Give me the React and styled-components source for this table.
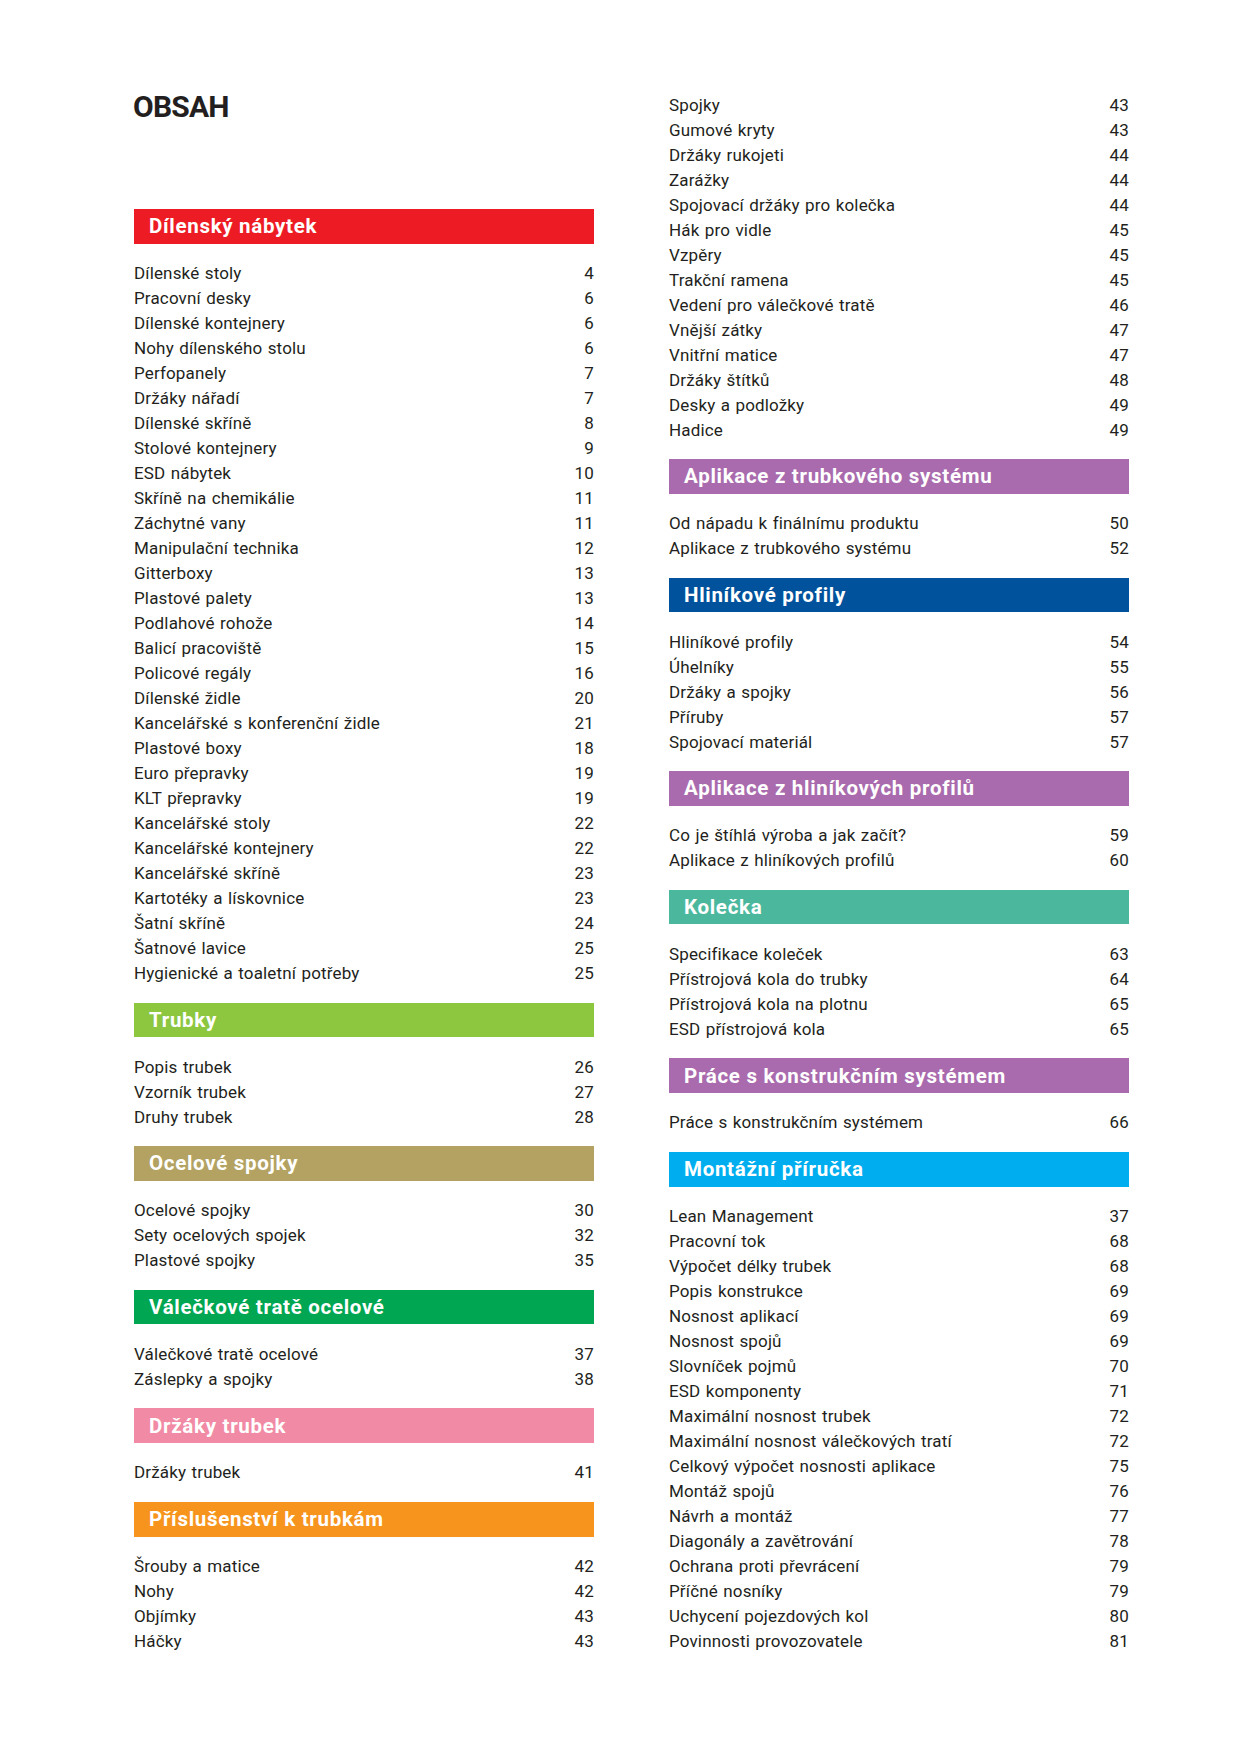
import React from 'react'
import styled, { createGlobalStyle } from 'styled-components'

const GlobalStyle = createGlobalStyle`
  body {
    margin: 0;
    background: #ffffff;
    font-family: Roboto, "Liberation Sans", sans-serif;
    color: #231f20;
  }
`;

const Page = styled.div`
  width: 1240px;
  min-height: 1753px;
  box-sizing: border-box;
  padding: 0 111px 0 134px;
  display: grid;
  grid-template-columns: 460px 460px;
  column-gap: 75px;
  align-items: start;
`;

const Column = styled.div`
  display: flex;
  flex-direction: column;
  padding-top: ${p => p.top}px;
`;

const Title = styled.h1`
  margin: 0 0 0 -1px;
  height: 120px;
  font-size: 30px;
  line-height: 36px;
  font-weight: 700;
  letter-spacing: -0.8px;
  color: #231f20;
`;

const Section = styled.section`
  display: flex;
  flex-direction: column;
  & + & {
    margin-top: 17px;
  }
`;

const Header = styled.h2`
  margin: 0 0 17px;
  height: 34.6px;
  padding: 0 15px;
  display: flex;
  align-items: center;
  background: ${p => p.color};
  color: #ffffff;
  font-size: 20.5px;
  font-weight: 700;
  letter-spacing: 0.7px;
`;

const Row = styled.div`
  display: flex;
  justify-content: space-between;
  align-items: center;
  height: 25px;
  font-size: 17px;
  letter-spacing: 0.15px;
  word-spacing: 1px;
`;

const PageNo = styled.span`
  font-variant-numeric: tabular-nums;
`;

const LEFT = [
  {
    title: 'Dílenský nábytek',
    color: '#ed1c24',
    items: [
      ['Dílenské stoly', 4],
      ['Pracovní desky', 6],
      ['Dílenské kontejnery', 6],
      ['Nohy dílenského stolu', 6],
      ['Perfopanely', 7],
      ['Držáky nářadí', 7],
      ['Dílenské skříně', 8],
      ['Stolové kontejnery', 9],
      ['ESD nábytek', 10],
      ['Skříně na chemikálie', 11],
      ['Záchytné vany', 11],
      ['Manipulační technika', 12],
      ['Gitterboxy', 13],
      ['Plastové palety', 13],
      ['Podlahové rohože', 14],
      ['Balicí pracoviště', 15],
      ['Policové regály', 16],
      ['Dílenské židle', 20],
      ['Kancelářské s konferenční židle', 21],
      ['Plastové boxy', 18],
      ['Euro přepravky', 19],
      ['KLT přepravky', 19],
      ['Kancelářské stoly', 22],
      ['Kancelářské kontejnery', 22],
      ['Kancelářské skříně', 23],
      ['Kartotéky a lískovnice', 23],
      ['Šatní skříně', 24],
      ['Šatnové lavice', 25],
      ['Hygienické a toaletní potřeby', 25],
    ],
  },
  {
    title: 'Trubky',
    color: '#8dc63f',
    items: [
      ['Popis trubek', 26],
      ['Vzorník trubek', 27],
      ['Druhy trubek', 28],
    ],
  },
  {
    title: 'Ocelové spojky',
    color: '#b3a262',
    items: [
      ['Ocelové spojky', 30],
      ['Sety ocelových spojek', 32],
      ['Plastové spojky', 35],
    ],
  },
  {
    title: 'Válečkové tratě ocelové',
    color: '#00a651',
    items: [
      ['Válečkové tratě ocelové', 37],
      ['Záslepky a spojky', 38],
    ],
  },
  {
    title: 'Držáky trubek',
    color: '#f18aa4',
    items: [['Držáky trubek', 41]],
  },
  {
    title: 'Příslušenství k trubkám',
    color: '#f7941d',
    items: [
      ['Šrouby a matice', 42],
      ['Nohy', 42],
      ['Objímky', 43],
      ['Háčky', 43],
    ],
  },
]

const RIGHT = [
  {
    items: [
      ['Spojky', 43],
      ['Gumové kryty', 43],
      ['Držáky rukojeti', 44],
      ['Zarážky', 44],
      ['Spojovací držáky pro kolečka', 44],
      ['Hák pro vidle', 45],
      ['Vzpěry', 45],
      ['Trakční ramena', 45],
      ['Vedení pro válečkové tratě', 46],
      ['Vnější zátky', 47],
      ['Vnitřní matice', 47],
      ['Držáky štítků', 48],
      ['Desky a podložky', 49],
      ['Hadice', 49],
    ],
  },
  {
    title: 'Aplikace z trubkového systému',
    color: '#a96bad',
    items: [
      ['Od nápadu k finálnímu produktu', 50],
      ['Aplikace z trubkového systému', 52],
    ],
  },
  {
    title: 'Hliníkové profily',
    color: '#00529c',
    items: [
      ['Hliníkové profily', 54],
      ['Úhelníky', 55],
      ['Držáky a spojky', 56],
      ['Příruby', 57],
      ['Spojovací materiál', 57],
    ],
  },
  {
    title: 'Aplikace z hliníkových profilů',
    color: '#a96bad',
    items: [
      ['Co je štíhlá výroba a jak začít?', 59],
      ['Aplikace z hliníkových profilů', 60],
    ],
  },
  {
    title: 'Kolečka',
    color: '#4bb89e',
    items: [
      ['Specifikace koleček', 63],
      ['Přístrojová kola do trubky', 64],
      ['Přístrojová kola na plotnu', 65],
      ['ESD přístrojová kola', 65],
    ],
  },
  {
    title: 'Práce s konstrukčním systémem',
    color: '#a96bad',
    items: [['Práce s konstrukčním systémem', 66]],
  },
  {
    title: 'Montážní příručka',
    color: '#00aeef',
    items: [
      ['Lean Management', 37],
      ['Pracovní tok', 68],
      ['Výpočet délky trubek', 68],
      ['Popis konstrukce', 69],
      ['Nosnost aplikací', 69],
      ['Nosnost spojů', 69],
      ['Slovníček pojmů', 70],
      ['ESD komponenty', 71],
      ['Maximální nosnost trubek', 72],
      ['Maximální nosnost válečkových tratí', 72],
      ['Celkový výpočet nosnosti aplikace', 75],
      ['Montáž spojů', 76],
      ['Návrh a montáž', 77],
      ['Diagonály a zavětrování', 78],
      ['Ochrana proti převrácení', 79],
      ['Příčné nosníky', 79],
      ['Uchycení pojezdových kol', 80],
      ['Povinnosti provozovatele', 81],
    ],
  },
]

function TocSection({ title, color, items }) {
  return (
    <Section>
      {title && <Header color={color}>{title}</Header>}
      {items.map(([label, page]) => (
        <Row key={label}>
          <span>{label}</span>
          <PageNo>{page}</PageNo>
        </Row>
      ))}
    </Section>
  )
}

export default function App() {
  return (
    <>
      <GlobalStyle />
      <Page>
        <Column top={89}>
          <Title>OBSAH</Title>
          {LEFT.map(s => <TocSection key={s.title} {...s} />)}
        </Column>
        <Column top={92}>
          {RIGHT.map((s, i) => <TocSection key={i} {...s} />)}
        </Column>
      </Page>
    </>
  )
}
